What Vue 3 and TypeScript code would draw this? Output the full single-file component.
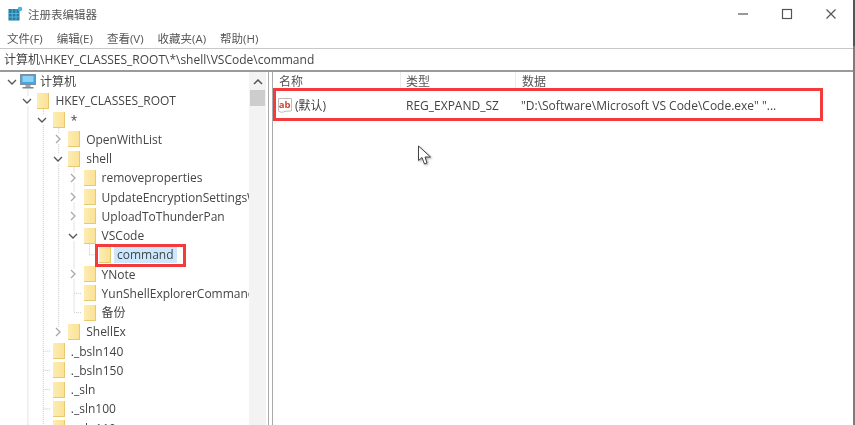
<script setup lang="ts">
interface Row {
  label: string
  depth: number
  arrow?: 'open' | 'closed'
  kind?: 'pc'
  selected?: boolean
}

const rows: Row[] = [
  { label: '计算机', depth: 0, arrow: 'open', kind: 'pc' },
  { label: 'HKEY_CLASSES_ROOT', depth: 1, arrow: 'open' },
  { label: '*', depth: 2, arrow: 'open' },
  { label: 'OpenWithList', depth: 3, arrow: 'closed' },
  { label: 'shell', depth: 3, arrow: 'open' },
  { label: 'removeproperties', depth: 4, arrow: 'closed' },
  { label: 'UpdateEncryptionSettingsWork', depth: 4, arrow: 'closed' },
  { label: 'UploadToThunderPan', depth: 4, arrow: 'closed' },
  { label: 'VSCode', depth: 4, arrow: 'open' },
  { label: 'command', depth: 5, selected: true },
  { label: 'YNote', depth: 4, arrow: 'closed' },
  { label: 'YunShellExplorerCommand', depth: 4 },
  { label: '备份', depth: 4 },
  { label: 'ShellEx', depth: 3, arrow: 'closed' },
  { label: '._bsln140', depth: 2 },
  { label: '._bsln150', depth: 2 },
  { label: '._sln', depth: 2 },
  { label: '._sln100', depth: 2 },
  { label: '._sln110', depth: 2 }
]

const rowH = 19.25
const rowMid = (i: number) => i * rowH + rowH / 2
const guideX = (d: number) => 12.5 + d * 15.4

const verticals = [
  { d: 1, from: 1, to: 19 },
  { d: 2, from: 2, to: 19 },
  { d: 3, from: 3, to: 13 },
  { d: 4, from: 5, to: 12 },
  { d: 5, from: 9, to: 9 }
].map((g) => ({
  x: guideX(g.d),
  y1: rowMid(g.from - 1) + 8,
  y2: g.to >= 19 ? 370 : rowMid(g.to)
}))

const stubs = rows
  .map((r, i) => ({ r, i }))
  .filter(({ r }) => !r.arrow)
  .map(({ r, i }) => ({ x1: guideX(r.depth), x2: guideX(r.depth) + 8, y: rowMid(i) }))

const indent = (d: number) => ({ paddingLeft: `${4 + d * 15.4}px` })
const menus = ['文件(F)', '编辑(E)', '查看(V)', '收藏夹(A)', '帮助(H)']
</script>

<template>
  <div class="window">
    <header class="titlebar">
      <svg class="app-icon" width="15" height="15" viewBox="0 0 15 15">
        <rect x="0.500" y="3" width="11" height="11.500" fill="#1f7fa8" />
        <path d="M0.500 7.500h11M0.500 11h11M4.200 3v11.500M8 3v11.500" stroke="#7cc0dc" stroke-width="0.700" />
        <circle cx="12" cy="3" r="2.300" fill="#4fb2e0" />
      </svg>
      <span class="title">注册表编辑器</span>
      <div class="controls">
        <svg width="12" height="12" viewBox="0 0 12 12"><path d="M1 6h10" stroke="#555" stroke-width="1.200" /></svg>
        <svg width="12" height="12" viewBox="0 0 12 12"><rect x="1.500" y="1.500" width="9" height="9" fill="none" stroke="#555" stroke-width="1.200" /></svg>
        <svg width="12" height="12" viewBox="0 0 12 12"><path d="M1.500 1.500l9 9M10.500 1.500l-9 9" stroke="#555" stroke-width="1.200" /></svg>
      </div>
    </header>

    <nav class="menubar">
      <span v-for="m in menus" :key="m">{{ m }}</span>
    </nav>

    <div class="address">计算机\HKEY_CLASSES_ROOT\*\shell\VSCode\command</div>

    <main class="body">
      <section class="tree">
        <div class="tree-scroll">
          <svg class="guides" width="249" height="355">
            <line v-for="(v, i) in verticals" :key="'v' + i" :x1="v.x" :x2="v.x" :y1="v.y1" :y2="v.y2" />
            <line v-for="(s, i) in stubs" :key="'s' + i" :x1="s.x1" :x2="s.x2" :y1="s.y" :y2="s.y" />
          </svg>
          <div v-for="r in rows" :key="r.label" class="row" :style="indent(r.depth)">
            <span class="arrow">
              <svg v-if="r.arrow === 'open'" width="10" height="10" viewBox="0 0 10 10"><path d="M1 3l4 4 4-4" fill="none" stroke="#555" stroke-width="1.300" /></svg>
              <svg v-else-if="r.arrow === 'closed'" width="10" height="10" viewBox="0 0 10 10"><path d="M3 1l4 4-4 4" fill="none" stroke="#a8a8a8" stroke-width="1.300" /></svg>
            </span>
            <svg v-if="r.kind === 'pc'" class="icon" width="16" height="15" viewBox="0 0 16 15">
              <rect x="0.500" y="0.500" width="15" height="10" fill="#3fa6e8" stroke="#7d8fa0" />
              <rect x="2.500" y="2" width="11" height="6" fill="#8fd0f5" />
              <path d="M5.500 11h5v2h-5z" fill="#9aa5ae" />
              <path d="M2.500 13h11v1.500h-11z" fill="#7d8791" />
            </svg>
            <span v-else class="folder"></span>
            <span class="label" :class="{ selected: r.selected, pc: r.kind === 'pc' }">{{ r.label }}</span>
          </div>
        </div>
        <div class="scrollbar">
          <svg width="10" height="6" viewBox="0 0 10 6"><path d="M1 5l4-4 4 4" fill="none" stroke="#555" stroke-width="1.500" /></svg>
          <div class="thumb"></div>
        </div>
      </section>

      <section class="list">
        <div class="list-head">
          <span class="col c-name">名称</span>
          <span class="col c-type">类型</span>
          <span class="col c-data">数据</span>
        </div>
        <div class="list-row">
          <span class="c-name entry">
            <svg class="ab" width="16" height="17" viewBox="0 0 16 17">
              <path d="M1.500 1.500h13v12c-2 1.500-4 0-6.500 1s-4.500 1-6.500-.5z" fill="#fff" stroke="#c4b8b8" />
              <text x="1.800" y="10.500" class="ab-text">ab</text>
            </svg>
            (默认)
          </span>
          <span class="c-type">REG_EXPAND_SZ</span>
          <span class="c-data">"D:\Software\Microsoft VS Code\Code.exe" "...</span>
        </div>
      </section>
    </main>

    <div class="mark mark-row"></div>
    <div class="mark mark-cmd"></div>
    <svg class="cursor" width="17" height="23" viewBox="0 0 17 23">
      <path d="M1.500 1v14.500l3.500-3 2.500 6.500 2.500-1-2-6h5.500z" fill="#fff" stroke="#444" stroke-width="1" />
    </svg>
  </div>
</template>

<style scoped>
.window {
  position: relative;
  width: 853px;
  height: 425px;
  box-sizing: content-box;
  overflow: hidden;
  background: #fff;
  border-right: 2px solid #777;
  border-image: linear-gradient(#555 0, #555 47px, #8a7878 47px) 1;
  font-family: "Open Sans", "Noto Sans CJK SC", sans-serif;
  font-size: 12px;
  color: #444;
  filter: blur(0.5px);
  display: flex;
  flex-direction: column;
}
.titlebar {
  height: 27px;
  display: flex;
  align-items: center;
  padding-left: 8px;
  flex: none;
}
.title {
  margin-left: 5px;
  font-size: 11.5px;
  color: #555;
}
.controls {
  margin-left: auto;
  display: flex;
  gap: 32px;
  padding-right: 16px;
}
.menubar {
  height: 21px;
  display: flex;
  align-items: center;
  gap: 14px;
  padding-left: 7px;
  flex: none;
  font-size: 11.5px;
  color: #555;
}
.address {
  height: 21px;
  line-height: 21px;
  padding-left: 4px;
  flex: none;
  border-top: 1px solid #c8c8c8;
  border-bottom: 2px solid #9a9a9a;
  color: #444;
  white-space: nowrap;
}
.body {
  flex: 1;
  min-height: 0;
  display: flex;
}
.tree {
  width: 268px;
  flex: none;
  display: flex;
  border-right: 1px solid #aaa;
  overflow: hidden;
}
.tree-scroll {
  position: relative;
  width: 249px;
  flex: none;
  overflow: hidden;
}
.guides {
  position: absolute;
  left: 0;
  top: 0;
}
.guides line {
  stroke: #c8c8c8;
  stroke-width: 1;
  stroke-dasharray: 1 1;
}
.row {
  position: relative;
  height: 19.25px;
  display: flex;
  align-items: center;
  white-space: nowrap;
  box-sizing: border-box;
}
.arrow {
  width: 15px;
  flex: none;
  display: flex;
  justify-content: center;
  background: #fff;
}
.icon {
  margin-left: 1px;
  flex: none;
}
.folder {
  width: 12px;
  height: 16px;
  margin-left: 3px;
  flex: none;
  box-sizing: border-box;
  background: linear-gradient(90deg, #fcedb4, #fbe294);
  border-right: 1px solid #e8c970;
  border-bottom: 1px solid #e8c970;
}
.label {
  margin-left: 3px;
  padding: 0 3px;
  line-height: 17px;
  background: #fff;
}
.label.pc {
  margin-left: 1px;
}
.label.selected {
  background: #cce8ff;
}
.scrollbar {
  width: 17px;
  flex: none;
  background: #f3f3f3;
  display: flex;
  flex-direction: column;
  align-items: center;
  padding-top: 7px;
  box-sizing: border-box;
}
.thumb {
  width: 15px;
  height: 16px;
  margin-top: 5px;
  background: #cdcdcd;
}
.list {
  flex: 1;
  margin-left: 3px;
  border-left: 1px solid #aaa;
}
.list-head,
.list-row {
  display: flex;
  align-items: center;
}
.list-head {
  height: 18px;
  color: #555;
}
.list-row {
  height: 24px;
  margin-top: 3px;
}
.c-name {
  width: 127px;
  flex: none;
  box-sizing: border-box;
  padding-left: 6px;
}
.c-type {
  width: 115px;
  flex: none;
  box-sizing: border-box;
  padding-left: 5px;
}
.c-data {
  padding-left: 6px;
  white-space: nowrap;
}
.list-row .c-type {
  padding-left: 6px;
}
.col + .col {
  border-left: 1px solid #ececec;
}
.entry {
  display: flex;
  align-items: center;
  gap: 2px;
  padding-left: 4px;
}
.ab-text {
  font-size: 9.5px;
  font-weight: 700;
  fill: #d0452f;
}
.mark {
  position: absolute;
  border: 3px solid #f33b3b;
  box-sizing: border-box;
  pointer-events: none;
}
.mark-row {
  left: 273px;
  top: 88px;
  width: 550px;
  height: 33px;
}
.mark-cmd {
  left: 95px;
  top: 244px;
  width: 91px;
  height: 23px;
}
.cursor {
  position: absolute;
  left: 417px;
  top: 145px;
  filter: drop-shadow(1px 1px 1px rgba(0, 0, 0, 0.35));
}
</style>
